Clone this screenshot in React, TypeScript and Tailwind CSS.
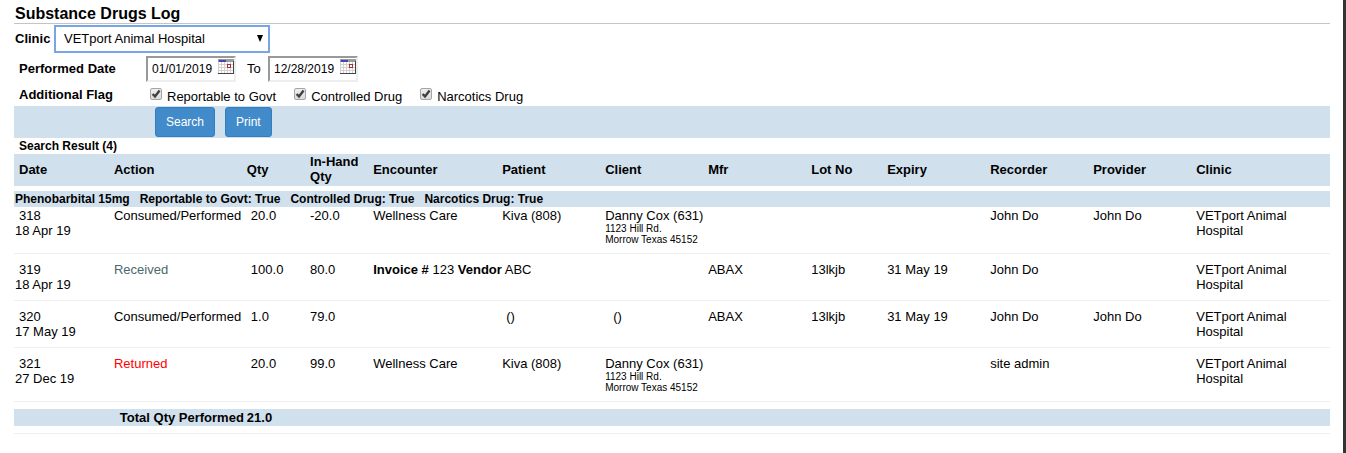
import type { ReactNode } from "react";

type Entry = {
  id: string;
  date: string;
  action: string;
  actionClass?: string;
  qty: string;
  inHand: string;
  encounter?: string;
  invoice?: { number: string; vendor: string };
  patient?: string;
  patientClass?: string;
  client?: string;
  address?: string[];
  mfr?: string;
  lot?: string;
  expiry?: string;
  recorder: string;
  provider?: string;
};

const address = ["1123 Hill Rd.", "Morrow Texas 45152"];

const entries: Entry[] = [
  { id: "318", date: "18 Apr 19", action: "Consumed/Performed", qty: "20.0", inHand: "-20.0", encounter: "Wellness Care", patient: "Kiva (808)", client: "Danny Cox (631)", address, recorder: "John Do", provider: "John Do" },
  { id: "319", date: "18 Apr 19", action: "Received", actionClass: "text-[#49696b]", qty: "100.0", inHand: "80.0", invoice: { number: "123", vendor: "ABC" }, mfr: "ABAX", lot: "13lkjb", expiry: "31 May 19", recorder: "John Do" },
  { id: "320", date: "17 May 19", action: "Consumed/Performed", qty: "1.0", inHand: "79.0", patient: "()", patientClass: "pl-1", client: "()", mfr: "ABAX", lot: "13lkjb", expiry: "31 May 19", recorder: "John Do", provider: "John Do" },
  { id: "321", date: "27 Dec 19", action: "Returned", actionClass: "text-[#ff0000]", qty: "20.0", inHand: "99.0", encounter: "Wellness Care", patient: "Kiva (808)", client: "Danny Cox (631)", address, recorder: "site admin" },
];

const headings = ["Date", "Action", "Qty", "In-Hand Qty", "Encounter", "Patient", "Client", "Mfr", "Lot No", "Expiry", "Recorder", "Provider", "Clinic"];

function CalendarIcon() {
  return (
    <svg width="16" height="15" viewBox="0 0 16 15" shapeRendering="crispEdges" aria-hidden="true">
      <rect width="16" height="15" fill="#c8c8c8" />
      <rect y="3" width="15" height="11" fill="#fff" />
      <path d="M0 5.5h15M0 8.5h15M0 11.5h15M0.5 3v11M3.5 3v11M6.5 3v11M9.5 3v11M12.5 3v11" stroke="#d4d0d0" fill="none" />
      <rect width="16" height="3" fill="#9c9c9c" />
      <rect x="1" y="1" width="7" height="2" fill="#4444b4" />
      <rect x="9.5" y="5.5" width="3" height="3" fill="#fff" stroke="#a83232" />
      <path d="M15.5 2v13M0 14.5h16" stroke="#444" fill="none" />
    </svg>
  );
}

function DateField({ label, value }: { label: string; value: string }) {
  return (
    <div className="flex h-[26px] w-[90px] items-start border-2 border-t-[#999] border-r-[#eee] border-b-[#eee] border-l-[#999] pl-1">
      <input aria-label={label} defaultValue={value} className="mt-[3px] h-4 w-[66px] text-xs leading-4 outline-none" />
      <button type="button" aria-label={"Choose " + label} className="mt-px">
        <CalendarIcon />
      </button>
    </div>
  );
}

function Flag({ children }: { children: ReactNode }) {
  return (
    <label className="flex items-center gap-[5px]">
      <span className="mb-1 grid">
        <input type="checkbox" defaultChecked className="peer size-3 appearance-none rounded-[2px] border border-[#a5a5a5] bg-linear-to-b from-[#eeeeee] to-[#dcdcdc] [grid-area:1/1]" />
        <svg width="12" height="12" viewBox="0 0 12 12" aria-hidden="true" className="pointer-events-none invisible [grid-area:1/1] peer-checked:visible">
          <path d="M2.6 6 5 8.4 9.6 2.6" fill="none" stroke="#404040" strokeWidth="2.4" />
        </svg>
      </span>
      {children}
    </label>
  );
}

function EntryRow({ entry, first }: { entry: Entry; first: boolean }) {
  const cell = first ? "border-b border-[#eee] pt-px pb-2 pl-px" : "border-b border-[#eee] pt-2 pb-2 pl-px";
  return (
    <tr className="align-top">
      <td className={cell}>
        <div className="pl-1">{entry.id}</div>
        <div>{entry.date}</div>
      </td>
      <td className={cell}>
        <span className={entry.actionClass}>{entry.action}</span>
      </td>
      <td className={cell}>
        <div className="pl-1">{entry.qty}</div>
      </td>
      <td className={cell}>{entry.inHand}</td>
      {entry.invoice ? (
        <td colSpan={3} className={cell}>
          <b>Invoice #</b> {entry.invoice.number} <b>Vendor</b> {entry.invoice.vendor}
        </td>
      ) : (
        <>
          <td className={cell}>{entry.encounter}</td>
          <td className={cell}>
            <div className={entry.patientClass}>{entry.patient}</div>
          </td>
          <td className={cell}>
            <div className={entry.address ? "whitespace-nowrap" : "pl-2"}>{entry.client}</div>
            {entry.address?.map((line) => (
              <div key={line} className="text-[10px] leading-[11px] whitespace-nowrap">{line}</div>
            ))}
          </td>
        </>
      )}
      <td className={cell}>{entry.mfr}</td>
      <td className={cell}>{entry.lot}</td>
      <td className={cell}>{entry.expiry}</td>
      <td className={cell}>{entry.recorder}</td>
      <td className={cell}>{entry.provider}</td>
      <td className={cell}>
        VETport Animal
        <br />
        Hospital
      </td>
    </tr>
  );
}

const button = "h-[30px] rounded-[3px] border border-[#357ebd] bg-[#428bca] px-[10px] text-xs text-white";

export default function App() {
  return (
    <main className="min-h-screen border-r-3 border-[#333] bg-white pr-[13px] pl-[14px] font-['Liberation_Sans',Arial,sans-serif] text-[13px] leading-[15px] text-black">
      <h1 className="border-b border-[#c4c4c4] pt-1 pl-px text-base leading-[19px] font-bold">Substance Drugs Log</h1>
      <div className="flex h-[30px] items-center pb-px pl-px">
        <label htmlFor="clinic" className="w-[39px] font-bold">Clinic</label>
        <div className="grid items-center">
          <select id="clinic" className="h-7 w-[216px] appearance-none border-2 border-[#78a5e6] bg-white pl-2 outline-none [grid-area:1/1]">
            <option>VETport Animal Hospital</option>
          </select>
          <svg width="6" height="7" viewBox="0 0 6 7" aria-hidden="true" className="pointer-events-none mr-[7px] justify-self-end [grid-area:1/1]">
            <path d="M0 0h6L3 7z" fill="#000" />
          </svg>
        </div>
      </div>
      <div className="flex h-[30px] items-center pl-[5px]">
        <span className="w-[127px] pb-px font-bold">Performed Date</span>
        <DateField label="performed from" value="01/01/2019" />
        <span className="w-8 pb-px pl-[11px]">To</span>
        <DateField label="performed to" value="12/28/2019" />
      </div>
      <div className="flex h-[22px] items-center pb-[2px] pl-[5px]">
        <span className="w-[131px] font-bold">Additional Flag</span>
        <div className="flex gap-[18px] pt-1">
          <Flag>Reportable to Govt</Flag>
          <Flag>Controlled Drug</Flag>
          <Flag>Narcotics Drug</Flag>
        </div>
      </div>
      <div className="flex h-8 items-center gap-[10px] bg-[#d1e0ed] pl-[141px]">
        <button type="button" className={button}>Search</button>
        <button type="button" className={button}>Print</button>
      </div>
      <h2 className="h-4 pl-[5px] text-xs leading-4 font-bold">Search Result (4)</h2>
      <table className="w-full table-fixed border-separate border-spacing-0 text-left">
        <colgroup>
          <col className="w-[7.52%]" />
          <col className="w-[10.1%]" />
          <col className="w-[4.8%]" />
          <col className="w-[4.8%]" />
          <col className="w-[9.8%]" />
          <col className="w-[7.83%]" />
          <col className="w-[7.83%]" />
          <col className="w-[7.83%]" />
          <col className="w-[5.77%]" />
          <col className="w-[7.83%]" />
          <col className="w-[7.83%]" />
          <col className="w-[7.83%]" />
          <col />
        </colgroup>
        <thead>
          <tr className="h-8 bg-[#d1e0ed]">
            {headings.map((heading, i) => (
              <th key={heading} scope="col" className={i === 0 ? "pb-[2px] pl-[5px]" : "pb-[2px] pl-px"}>{heading}</th>
            ))}
          </tr>
        </thead>
        <tbody>
          <tr aria-hidden="true">
            <td colSpan={13} className="h-[5px]" />
          </tr>
          <tr className="bg-[#d1e0ed]">
            <th colSpan={13} scope="rowgroup" className="pl-px text-xs leading-4">
              <div className="flex gap-[10px]">
                <span>Phenobarbital 15mg</span>
                <span>Reportable to Govt: True</span>
                <span>Controlled Drug: True</span>
                <span>Narcotics Drug: True</span>
              </div>
            </th>
          </tr>
          {entries.map((entry, i) => (
            <EntryRow key={entry.id} entry={entry} first={i === 0} />
          ))}
        </tbody>
        <tfoot>
          <tr aria-hidden="true">
            <td colSpan={13} className="h-[7px]" />
          </tr>
          <tr className="h-[17px] bg-[#d1e0ed] font-bold">
            <td />
            <th scope="row" className="pr-[2px] text-right whitespace-nowrap">Total Qty Performed</th>
            <td className="pl-px">21.0</td>
            <td colSpan={10} />
          </tr>
          <tr aria-hidden="true">
            <td colSpan={13} className="h-2 border-b border-[#eee]" />
          </tr>
        </tfoot>
      </table>
    </main>
  );
}
